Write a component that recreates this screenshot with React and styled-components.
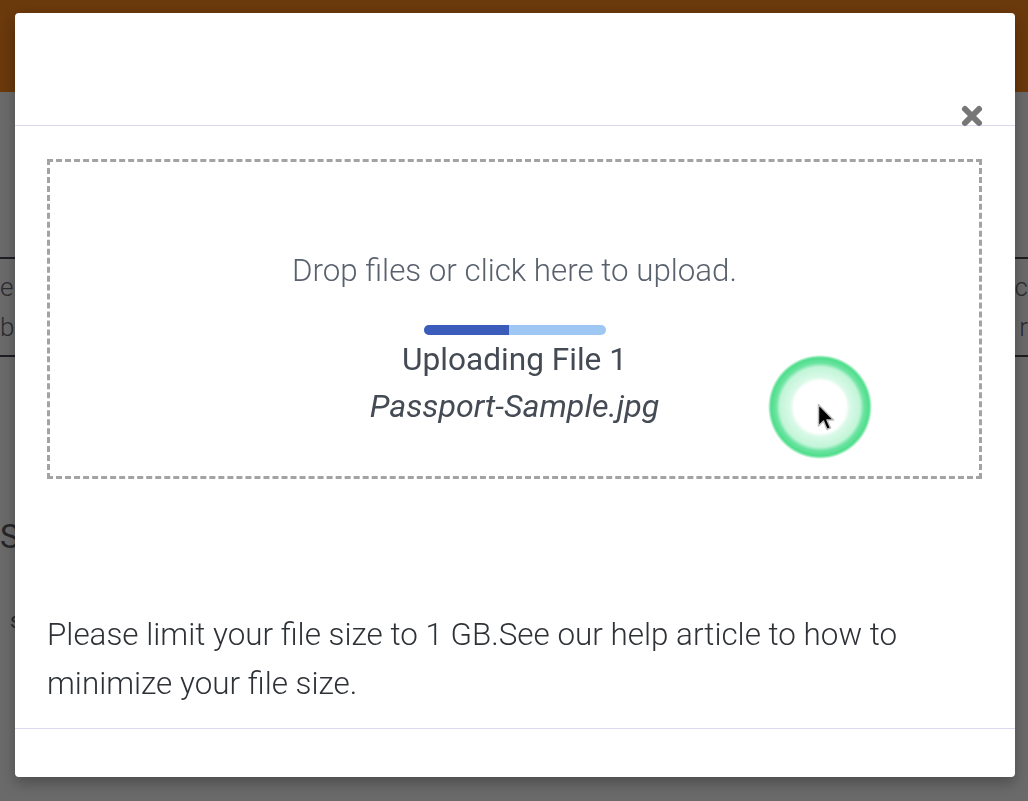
import React from "react";
import styled, { createGlobalStyle } from "styled-components";

const Global = createGlobalStyle`
  html, body { margin: 0; padding: 0; }
  body {
    font-family: "Roboto", "Liberation Sans", sans-serif;
    background: #6a6a6b;
    overflow: hidden;
  }
`;

/* ---------- page behind the overlay ---------- */
const Page = styled.div`
  width: 1028px;
  height: 801px;
  background: #6a6a6b;
  display: flex;
  flex-direction: column;
  overflow: hidden;
`;

const TopBar = styled.div`
  height: 92px;
  flex: none;
  background: #6a390c;
`;

const TableRow = styled.div`
  margin-top: 165px;
  height: 96px;
  border-top: 2px solid #1e1e22;
  border-bottom: 2px solid #1e1e22;
  display: flex;
  justify-content: space-between;
  align-items: center;
`;

const Cell = styled.div`
  display: flex;
  flex-direction: column;
  align-items: ${(p) => (p.$right ? "flex-end" : "flex-start")};
  font-size: 26px;
  font-weight: 300;
  line-height: 40px;
  color: #2c2c30;
  white-space: nowrap;
`;

const PageHeading = styled.div`
  margin: 160px 0 0 0;
  font-size: 33px;
  color: #26262a;
`;

const PageText = styled.div`
  margin: 52px 0 0 10px;
  font-size: 22px;
  color: #2a2a2e;
`;

/* ---------- modal ---------- */
const Modal = styled.div`
  position: fixed;
  top: 13px;
  left: 15px;
  width: 1000px;
  height: 764px;
  background: #ffffff;
  border-radius: 4px;
  box-shadow: 0 6px 14px rgba(0, 0, 0, 0.28);
  display: flex;
  flex-direction: column;
`;

const ModalHeader = styled.div`
  height: 112px;
  flex: none;
  border-bottom: 1px solid #dadaee;
  display: flex;
  justify-content: flex-end;
  align-items: flex-end;
  padding-right: 31px;
`;

const CloseButton = styled.button`
  border: none;
  background: transparent;
  padding: 0;
  margin-bottom: -3px;
  width: 24px;
  height: 24px;
  display: flex;
  align-items: center;
  justify-content: center;
  cursor: pointer;
  position: relative;
`;

const ModalBody = styled.div`
  flex: 1;
  padding: 33px 33px 20px 32px;
  display: flex;
  flex-direction: column;
`;

const DropZone = styled.div`
  height: 320px;
  box-sizing: border-box;
  border: 3px dashed #a3a3a3;
  display: flex;
  flex-direction: column;
  align-items: center;
  padding-top: 91px;
  position: relative;
`;

const DropText = styled.div`
  font-size: 31.3px;
  font-weight: 300;
  line-height: 36px;
  color: #58616d;
`;

const Progress = styled.div`
  margin-top: 36px;
  width: 182px;
  height: 10px;
  border-radius: 5px;
  background: #9fc7f4;
  overflow: hidden;
  flex: none;
`;

const ProgressFill = styled.div`
  height: 100%;
  background: #3c5cbc;
`;

const UploadTitle = styled.div`
  margin-top: 1px;
  font-size: 31.6px;
  font-weight: 400;
  line-height: 47px;
  color: #434a54;
`;

const FileName = styled.div`
  font-size: 32.2px;
  font-style: italic;
  line-height: 47px;
  color: #454b55;
`;

const Note = styled.p`
  margin: 131px 0 0;
  font-size: 31.4px;
  font-weight: 300;
  line-height: 49px;
  color: #2e3237;
`;

const ModalFooter = styled.div`
  flex: none;
  height: 49px;
  border-top: 1px solid #dadaee;
`;

/* click ripple with cursor, drawn over the drop zone */
const Ripple = styled.div`
  position: absolute;
  left: 718px;
  top: 193px;
  width: 104px;
  height: 104px;
  border-radius: 50%;
  background: radial-gradient(
    circle,
    #ffffff 0,
    #ffffff 26px,
    #d9f9e7 30px,
    #c2f5d8 40px,
    #6ce4a1 44px,
    #4fde8c 49px,
    rgba(79, 222, 140, 0.4) 51px,
    rgba(79, 222, 140, 0) 52px
  );
`;

const Cursor = styled.svg`
  position: absolute;
  left: 49px;
  top: 48px;
`;

export default function App() {
  const progress = 47;
  return (
    <>
      <Global />
      <Page>
        <TopBar />
        <TableRow>
          <Cell>
            <span>el</span>
            <span>b</span>
          </Cell>
          <Cell $right>
            <span>nc</span>
            <span>r</span>
          </Cell>
        </TableRow>
        <PageHeading>Se</PageHeading>
        <PageText>s</PageText>
      </Page>

      <Modal>
        <ModalHeader>
          <CloseButton aria-label="Close">
            <svg width="24" height="24" viewBox="0 0 24 24">
              <path
                d="M5 5 L19 19 M19 5 L5 19"
                stroke="#777777"
                strokeWidth="6"
                strokeLinecap="round"
              />
            </svg>
          </CloseButton>
        </ModalHeader>
        <ModalBody>
          <DropZone>
            <DropText>Drop files or click here to upload.</DropText>
            <Progress>
              <ProgressFill style={{ width: `${progress}%` }} />
            </Progress>
            <UploadTitle>Uploading File 1</UploadTitle>
            <FileName>Passport-Sample.jpg</FileName>
            <Ripple>
              <Cursor width="20" height="30" viewBox="0 0 20 30">
                <path
                  d="M1.5 1.5 L1.5 23 L6.5 18 L10 26.5 L13.5 25 L10 17 L16.5 17 Z"
                  fill="#000"
                  stroke="#bdbdbd"
                  strokeWidth="1.5"
                  strokeLinejoin="round"
                />
              </Cursor>
            </Ripple>
          </DropZone>
          <Note>
            Please limit your file size to 1 GB.See our help article to how to
            minimize your file size.
          </Note>
        </ModalBody>
        <ModalFooter />
      </Modal>
    </>
  );
}
